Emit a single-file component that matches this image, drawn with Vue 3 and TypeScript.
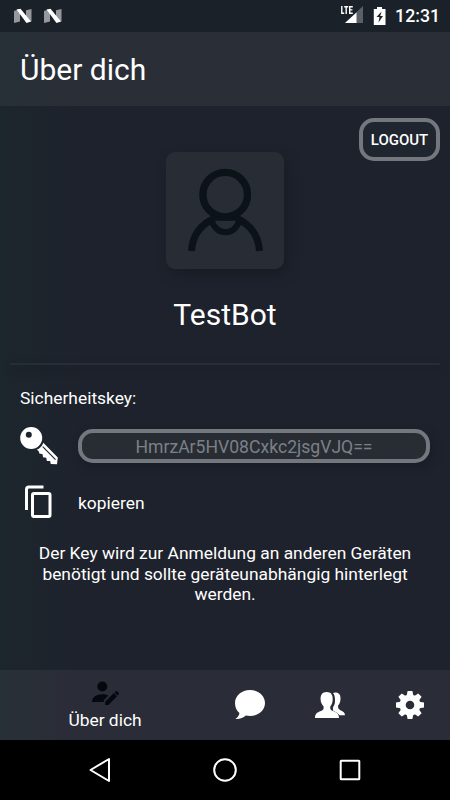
<script setup lang="ts">
import { ref } from 'vue'

const title = 'Über dich'
const userName = 'TestBot'
const securityKey = ref<string>('HmrzAr5HV08Cxkc2jsgVJQ==')
const notifications: number[] = [1, 2]
</script>

<template>
  <div class="screen">
    <div class="status">
      <div class="notes">
        <svg v-for="n in notifications" :key="n" width="20" height="16" viewBox="0 0 20 16">
          <path d="M1 3 7 1v12.500L1 15z" fill="#96989e" />
          <path d="M13 2.200 18.500 1v12.500L13 14z" fill="#96989e" />
          <path d="M3.500 1.500 7.500.8 18 13.500 13.500 15z" fill="#fff" />
        </svg>
      </div>
      <div class="system">
        <svg class="signal" width="24" height="20" viewBox="0 0 24 20">
          <path d="M22 1v17H4z" fill="#596067" />
          <path d="M15.500 7.500V18H4z" fill="#fff" />
          <g fill="none" stroke="#fff" stroke-width="1.400">
            <path d="M.8 1v7.300h2.400M3.200 1.700h4M5.200 1.700V9M11.800 1.700H8.700v6.600h3.100M8.700 4.900h2.700" />
          </g>
        </svg>
        <svg width="14" height="20" viewBox="0 0 14 20">
          <path d="M4 1h5v2h3.500v16H.8V3H4z" fill="#fff" />
          <path d="M8.600 5.500 3.500 11h3l-1 5.500L10 10H7.200z" fill="#1b2229" />
        </svg>
        <span class="clock">12:31</span>
      </div>
    </div>

    <header class="header"><h1>{{ title }}</h1></header>

    <main class="content">
      <button class="logout" type="button">LOGOUT</button>

      <section class="profile">
        <div class="avatar">
          <svg width="118" height="117" viewBox="0 0 118 117" fill="none" stroke="#0b1218" stroke-width="7">
            <circle cx="59.200" cy="42.700" r="22.300" stroke-width="7.400" />
            <path d="M25.500 99C26.500 83 35 72.500 48 66.500M93.500 99C92.500 83 84 72.500 71 66.500" />
            <path d="M45.500 69C52 84 67 84 73.500 69" stroke-width="6" />
            <path d="M45 66.500H74" stroke-width="4.500" />
          </svg>
        </div>
        <h2>{{ userName }}</h2>
      </section>

      <hr class="divider" />

      <section class="security">
        <label class="label" for="key">Sicherheitskey:</label>
        <div class="row key-row">
          <span class="icon-cell">
            <svg width="40" height="40" viewBox="0 0 40 40">
              <path fill="#fff" fill-rule="evenodd" d="M11.200 1a11 11 0 1 1 0 22 11 11 0 0 1 0-22M8.800 5.700a3 3 0 1 0 0 6 3 3 0 0 0 0-6" />
              <path fill="#fff" d="M23.300 16.800 37.800 31.400l-.8 6.800-6.200-.2-.7-3-3.200-.1-.7-3.200-3.200-.4-.4-3.100-3.200-.6-.8-2.600-1.900-1.200c3-1.200 5.400-3.500 6.600-7z" />
              <path d="m22.700 20.700 12.800 13" stroke="#1e222c" stroke-width="1.100" />
            </svg>
          </span>
          <div id="key" class="key-field">{{ securityKey }}</div>
        </div>
        <div class="row copy-row">
          <span class="icon-cell">
            <svg width="40" height="40" viewBox="0 0 40 40" fill="none" stroke="#fff" stroke-width="3">
              <path d="M6.500 29V8.500Q6.500 6 9 6H23.500" />
              <rect x="12.500" y="12.500" width="17.500" height="23" rx="1.500" />
            </svg>
          </span>
          <span class="copy">kopieren</span>
        </div>
        <p class="hint">Der Key wird zur Anmeldung an anderen Geräten benötigt und sollte geräteunabhängig hinterlegt werden.</p>
      </section>
    </main>

    <nav class="tabs">
      <div class="tab active">
        <svg width="28" height="26" viewBox="0 0 28 26" fill="#05080e">
          <circle cx="11.300" cy="6.500" r="5" />
          <path d="M1 22c0-5 4.500-7.800 10.200-7.800 2.300 0 4.500.4 6.200 1.300L12.800 20v2z" />
          <path d="m14.200 21.700 8.600-8.600 3.200 3.200-8.600 8.600h-3.200zM23.500 12.400l1.100-1.100q.7-.7 1.400 0l1.700 1.700q.7.700 0 1.400l-1 1.100z" />
        </svg>
        <span>{{ title }}</span>
      </div>
      <div class="tab">
        <svg width="32" height="32" viewBox="0 0 32 32" fill="#fff">
          <path d="M16 1c8.400 0 15 5.700 15 13S24.400 27 16 27c-1.500 0-2.900-.2-4.200-.5C9.200 29 5.500 30.400 1.300 30c2.500-1.500 3.900-3.300 4.100-5.900C2.600 21.700 1 18.200 1 14 1 6.700 7.600 1 16 1z" />
        </svg>
      </div>
      <div class="tab">
        <svg width="32" height="32" viewBox="0 0 32 32" fill="#fff">
          <path d="M19 4c1-.6 2-.7 3.200-.5 3.300.6 4.500 3 4.300 6.200-.1 3.200-.9 5.200-2.400 6.900-.2 2.500.1 3.600 2.400 4.600 2.800 1.200 4.400 2.400 4.500 5.100h-5.500c-1.500-2.400-4.200-3.300-6.500-4.700l-.1-3.100c1.800-2.400 2.300-4.800 2.100-7.900-.1-2.900-.6-4.900-2-6.600z" />
          <path d="M12.600 3c4.300 0 6.300 2.700 6.100 7.500-.1 3.200-.9 5.100-2.400 6.900-.3 2.500.1 3.500 2.600 4.500 4.300 1.700 6.100 2.800 6.100 7.100H1c0-4.300 1.700-5.400 6-7.100 2.500-1 2.900-2 2.600-4.500-1.500-1.800-2.900-3.700-3-6.900C6.400 5.700 8.400 3 12.600 3z" />
        </svg>
      </div>
      <div class="tab">
        <svg width="32" height="32" viewBox="-16 -16 32 32" fill="#fff">
          <path fill-rule="evenodd" d="M0-10.500A10.500 10.500 0 0 1 0 10.500 10.500 10.500 0 0 1 0-10.500M0-4.300A4.300 4.300 0 0 0 0 4.300 4.300 4.300 0 0 0 0-4.300" />
          <g v-for="a in 8" :key="a" :transform="`rotate(${a * 45})`">
            <path d="M-3.300-9.500-2.400-14H2.400L3.300-9.500z" />
          </g>
        </svg>
      </div>
    </nav>

    <footer class="system-nav">
      <svg width="26" height="26" viewBox="0 0 26 26"><path d="M22 2v22L3.500 13z" /></svg>
      <svg width="26" height="26" viewBox="0 0 26 26"><circle cx="13" cy="13" r="10.800" /></svg>
      <svg width="26" height="26" viewBox="0 0 26 26"><rect x="3.700" y="3.700" width="18.600" height="18.600" rx=".5" /></svg>
    </footer>
  </div>
</template>

<style>
body { margin: 0; background: #000; }
</style>

<style scoped>
* { box-sizing: border-box; }
.screen {
  width: 450px;
  height: 800px;
  display: flex;
  flex-direction: column;
  overflow: hidden;
  background: linear-gradient(90deg, #1c262d 0, #1e222c 80px, #1e222c 100%);
  color: #fff;
  font-family: Roboto, sans-serif;
  font-size: 17.400px;
}
.status {
  height: 32px;
  flex: none;
  display: flex;
  align-items: center;
  justify-content: space-between;
  padding: 0 10px 0 13px;
  background: #1b2128;
}
.notes { display: flex; gap: 10px; }
.system { display: flex; align-items: center; }
.signal { margin-right: 8px; margin-top: -2px; }
.clock { margin-left: 8px; font-size: 17.700px; line-height: 20px; font-weight: 500; }
.header {
  height: 74px;
  flex: none;
  display: flex;
  align-items: center;
  padding: 2px 20px 0;
  background: linear-gradient(90deg, #263036 0, #2a2e37 60px, #2a2e37 100%);
}
h1, h2 { margin: 0; font-weight: 400; }
h1 { font-size: 30px; line-height: 36px; }
.content { flex: 1; display: flex; flex-direction: column; padding: 12px 10px 0; }
.logout {
  align-self: flex-end;
  width: 81px;
  height: 43px;
  flex: none;
  padding: 1px 0 0;
  border: 4px solid #74777e;
  border-radius: 15px;
  background: #20262f;
  color: #fff;
  font: 500 15px/20px Roboto, sans-serif;
}
.profile { display: flex; flex-direction: column; align-items: center; margin-top: -9px; }
.avatar {
  width: 118px;
  height: 117px;
  border-radius: 9px;
  background: #282d35;
  box-shadow: 4px 6px 12px #171d25;
}
.avatar svg { display: block; }
h2 { margin-top: 28px; font-size: 30px; line-height: 36px; }
.divider { width: 430px; height: 2px; margin: 30px 0 0; border: 0; background: #252d36; box-shadow: 2px 4px 7px #181c26; }
.security { display: flex; flex-direction: column; padding: 22px 0 0 10px; }
.label { line-height: 22px; }
.row { display: flex; align-items: center; }
.icon-cell { width: 58px; display: flex; }
.key-row { height: 40px; margin-top: 17px; }
.key-field {
  width: 352px;
  height: 34px;
  border: 4px solid #74777e;
  border-radius: 15px;
  background: #282d34;
  color: #7d8087;
  font-size: 17.600px;
  line-height: 28px;
  text-align: center;
  box-shadow: 3px 4px 8px #191d27;
}
.copy-row { height: 40px; margin-top: 15px; }
.copy { padding-top: 3px; }
.hint { width: 410px; margin: 22px 0 0; padding: 0 10px; line-height: 20.500px; text-align: center; }
.tabs {
  height: 70px;
  flex: none;
  display: grid;
  grid-template-columns: 210px 80px 80px 80px;
  background: linear-gradient(90deg, #283037 0, #2a2d37 60px, #2a2d37 100%);
}
.tab { display: flex; align-items: center; justify-content: center; }
.active { flex-direction: column; }
.active span { line-height: 20px; margin-top: 4px; }
.system-nav {
  height: 60px;
  flex: none;
  display: flex;
  justify-content: space-between;
  align-items: center;
  padding: 0 87px;
  background: #000;
}
.system-nav svg { fill: none; stroke: #fff; stroke-width: 2; stroke-linejoin: round; }
</style>
